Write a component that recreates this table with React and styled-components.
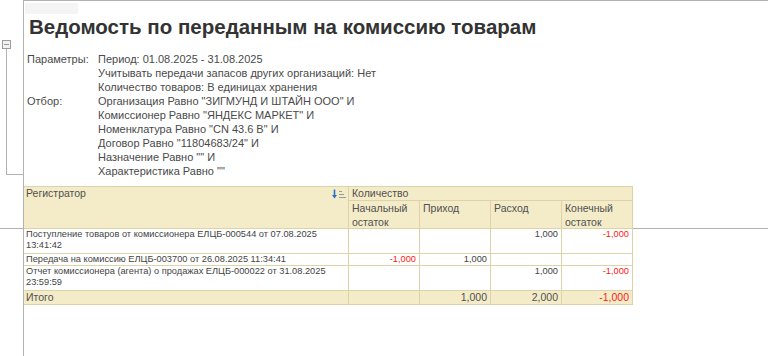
import React from 'react'
import styled, { createGlobalStyle } from 'styled-components';

const GlobalStyle = createGlobalStyle`
    html, body {
        margin: 0;
        padding: 0;
        background: #fff;
        font-family: "Liberation Sans", Arial, sans-serif;
    }
`;

const params = [
    ['Параметры:', 'Период: 01.08.2025 - 31.08.2025'],
    ['', 'Учитывать передачи запасов других организаций: Нет'],
    ['', 'Количество товаров: В единицах хранения'],
    ['Отбор:', 'Организация Равно "ЗИГМУНД И ШТАЙН ООО" И'],
    ['', 'Комиссионер Равно "ЯНДЕКС МАРКЕТ" И'],
    ['', 'Номенклатура Равно "CN 43.6 B" И'],
    ['', 'Договор Равно "11804683/24" И'],
    ['', 'Назначение Равно "" И'],
    ['', 'Характеристика Равно ""'],
];

const rows = [
    {
        reg: ['Поступление товаров от комиссионера ЕЛЦБ-000544 от 07.08.2025', '13:41:42'],
        vals: ['', '', '1,000', '-1,000'],
    },
    {
        reg: ['Передача на комиссию ЕЛЦБ-003700 от 26.08.2025 11:34:41'],
        vals: ['-1,000', '1,000', '', ''],
    },
    {
        reg: ['Отчет комиссионера (агента) о продажах ЕЛЦБ-000022 от 31.08.2025', '23:59:59'],
        vals: ['', '', '1,000', '-1,000'],
    },
];

const totals = ['', '1,000', '2,000', '-1,000'];

function SortIcon() {
    return (
        <svg width="14" height="10" viewBox="0 0 14 10">
            <path d="M2.5 0.5 V8" stroke="#2f6fc6" strokeWidth="1.6" />
            <path d="M0 6 L2.5 9.5 L5 6 Z" fill="#2f6fc6" />
            <path d="M7 2.5 H10 M7 5.5 H12 M7 8.5 H14" stroke="#9a9a9a" strokeWidth="1" />
        </svg>
    );
}

function App() {
    return (
        <Page>
            <GlobalStyle />
            <TopBand>
                <Gutter>
                    <Toggle />
                    <Bracket />
                </Gutter>
                <SheetTop>
                    <Tab />
                    <Title>Ведомость по переданным на комиссию товарам</Title>
                    <Params>
                        {params.map(([label, value], i) => (
                            <React.Fragment key={i}>
                                <span>{label}</span>
                                <span>{value}</span>
                            </React.Fragment>
                        ))}
                    </Params>
                </SheetTop>
            </TopBand>

            <HeaderBand>
                <Side $line />
                <Sheet>
                    <HeaderGrid>
                        <HeadCell $row="1 / 3" $split>
                            <span>Регистратор</span>
                            <SortIcon />
                        </HeadCell>
                        <HeadCell $col="2 / 6">Количество</HeadCell>
                        <HeadCell $tall>Начальный<br />остаток</HeadCell>
                        <HeadCell $tall>Приход</HeadCell>
                        <HeadCell $tall>Расход</HeadCell>
                        <HeadCell $tall>Конечный<br />остаток</HeadCell>
                    </HeaderGrid>
                    <Filler />
                </Sheet>
            </HeaderBand>

            <BodyBand>
                <Side />
                <Sheet>
                    <BodyGrid>
                        {rows.map((row, i) => (
                            <React.Fragment key={i}>
                                <Cell>
                                    {row.reg.map((line, j) => <Line key={j}>{line}</Line>)}
                                </Cell>
                                {row.vals.map((v, j) => (
                                    <Cell key={j} $num $neg={v.startsWith('-')}>{v}</Cell>
                                ))}
                            </React.Fragment>
                        ))}
                        <Cell $total>Итого</Cell>
                        {totals.map((v, j) => (
                            <Cell key={j} $total $num $neg={v.startsWith('-')}>{v}</Cell>
                        ))}
                    </BodyGrid>
                </Sheet>
            </BodyBand>
        </Page>
    )
}
export default App

const frame = '#b2b2b2';
const headBg = '#f4ecc9';
const gridLine = '#ddd3a8';

const Page = styled.div`
    min-height: 100vh;
    display: flex;
    flex-direction: column;
    color: #4a4a4a;
`;

const TopBand = styled.div`
    display: flex;
`;

const Gutter = styled.div`
    width: 23px;
    flex-shrink: 0;
    padding-top: 40px;
    box-sizing: border-box;
`;

const Toggle = styled.div`
    width: 9px;
    height: 9px;
    margin-left: 2px;
    box-sizing: border-box;
    border: 1px solid #9d9d9d;
    background: linear-gradient(#9d9d9d, #9d9d9d) center / 5px 1px no-repeat, #f2f2f2;
`;

const Bracket = styled.div`
    width: 17px;
    height: 126px;
    margin-left: 6px;
    box-sizing: border-box;
    border-left: 1px solid ${frame};
    border-bottom: 1px solid ${frame};
`;

const SheetTop = styled.div`
    flex: 1;
    border-left: 1px solid ${frame};
    border-top: 1px solid ${frame};
    padding: 1px 0 8px;
`;

const Tab = styled.div`
    width: 53px;
    height: 11px;
    margin: 1px 0 0 1px;
    background: #f4f4f4;
`;

const Title = styled.h1`
    margin: 1px 0 0;
    padding-left: 5px;
    font-size: 20.5px;
    line-height: 24px;
    font-weight: bold;
    color: #333;
    white-space: nowrap;
`;

const Params = styled.div`
    margin-top: 13px;
    padding-left: 3px;
    display: grid;
    grid-template-columns: 71px auto;
    font-size: 11px;
    line-height: 14px;
    white-space: nowrap;
`;

const HeaderBand = styled.div`
    display: flex;
`;

const BodyBand = styled.div`
    display: flex;
    flex: 1;
`;

const Side = styled.div`
    width: 23px;
    flex-shrink: 0;
    border-bottom: ${p => (p.$line ? `1px solid ${frame}` : 'none')};
`;

const Sheet = styled.div`
    flex: 1;
    display: flex;
    align-items: flex-start;
    border-left: 1px solid ${frame};
`;

const Filler = styled.div`
    flex: 1;
    align-self: stretch;
    border-bottom: 1px solid ${frame};
`;

const HeaderGrid = styled.div`
    display: grid;
    grid-template-columns: 324px 70px 70px 70px 70px;
    grid-template-rows: 13px 27px;
    gap: 1px;
    background: ${gridLine};
    border: 1px solid ${gridLine};
    border-left: none;
`;

const HeadCell = styled.div`
    background: ${headBg};
    grid-column: ${p => p.$col || 'auto'};
    grid-row: ${p => p.$row || 'auto'};
    display: ${p => (p.$split ? 'flex' : 'block')};
    justify-content: space-between;
    align-items: flex-start;
    padding: ${p => (p.$split ? '0 2px 0 2px' : '0 3px')};
    font-size: 10.5px;
    line-height: ${p => (p.$tall ? '14px' : '13px')};
    color: #505050;
    white-space: nowrap;
    svg {
        margin-top: 2px;
    }
`;

const BodyGrid = styled.div`
    display: grid;
    grid-template-columns: 324px 70px 70px 70px 70px;
    grid-template-rows: 24px 11px 24px 13px;
    gap: 1px;
    background: ${gridLine};
    border: 1px solid ${gridLine};
    border-left: none;
    border-top: none;
`;

const Cell = styled.div`
    background: ${p => (p.$total ? headBg : '#fff')};
    padding: ${p => (p.$num ? '0 3px 0 0' : '0 2px')};
    text-align: ${p => (p.$num ? 'right' : 'left')};
    color: ${p => (p.$neg ? '#ff1a1a' : p.$total ? '#505050' : '#444')};
    font-size: ${p => (p.$total ? '10.5px' : '9.25px')};
    line-height: ${p => (p.$total ? '13px' : '11px')};
    white-space: nowrap;
    overflow: hidden;
`;

const Line = styled.span`
    display: block;
`;
